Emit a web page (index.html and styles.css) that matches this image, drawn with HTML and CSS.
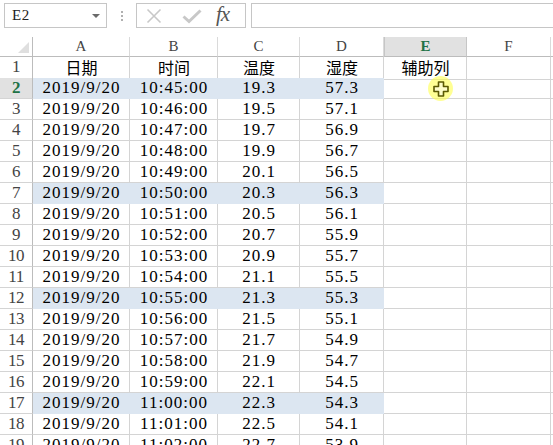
FILE: index.html
```html
<!DOCTYPE html>
<html>
<head>
<meta charset="utf-8">
<link rel="stylesheet" href="styles.css">
</head>
<body>
<div class="app">
  <div class="toolbar">
    <div class="namebox"><span class="name">E2</span><span class="caret"></span></div>
    <div class="grip"><i></i><i></i><i></i></div>
    <div class="fxbox">
      <svg class="ico x" width="16" height="16" viewBox="0 0 16 16"><path d="M1.5 1.5 L14.5 14.5 M14.5 1.5 L1.5 14.5" stroke="#c8c8c8" stroke-width="1.6" fill="none"/></svg>
      <svg class="ico v" width="20" height="16" viewBox="0 0 20 16"><path d="M1.5 8.5 L7 13.5 L18.5 2.5" stroke="#c8c8c8" stroke-width="3" fill="none"/></svg>
      <span class="fx">fx</span>
    </div>
    <div class="formula"></div>
  </div>
  <div class="sheet">
    <div class="row head">
      <div class="rh corner"><span class="tri"></span></div>
      <div class="ch">A</div><div class="ch">B</div><div class="ch">C</div><div class="ch">D</div><div class="ch sel">E</div><div class="ch">F</div><div class="ch"></div>
    </div>
    <div class="row"><div class="rh">1</div><div class="c"><span class="cjk" lang="zh-CN">日期</span></div><div class="c"><span class="cjk" lang="zh-CN">时间</span></div><div class="c"><span class="cjk" lang="zh-CN">温度</span></div><div class="c"><span class="cjk" lang="zh-CN">湿度</span></div><div class="c"><span class="cjk" lang="zh-CN">辅助列</span></div><div class="c"></div><div class="c"></div></div>
    <div class="row hl"><div class="rh sel">2</div><div class="c">2019/9/20</div><div class="c">10:45:00</div><div class="c">19.3</div><div class="c">57.3</div><div class="c"></div><div class="c"></div><div class="c"></div></div>
    <div class="row"><div class="rh">3</div><div class="c">2019/9/20</div><div class="c">10:46:00</div><div class="c">19.5</div><div class="c">57.1</div><div class="c"></div><div class="c"></div><div class="c"></div></div>
    <div class="row"><div class="rh">4</div><div class="c">2019/9/20</div><div class="c">10:47:00</div><div class="c">19.7</div><div class="c">56.9</div><div class="c"></div><div class="c"></div><div class="c"></div></div>
    <div class="row"><div class="rh">5</div><div class="c">2019/9/20</div><div class="c">10:48:00</div><div class="c">19.9</div><div class="c">56.7</div><div class="c"></div><div class="c"></div><div class="c"></div></div>
    <div class="row"><div class="rh">6</div><div class="c">2019/9/20</div><div class="c">10:49:00</div><div class="c">20.1</div><div class="c">56.5</div><div class="c"></div><div class="c"></div><div class="c"></div></div>
    <div class="row hl"><div class="rh">7</div><div class="c">2019/9/20</div><div class="c">10:50:00</div><div class="c">20.3</div><div class="c">56.3</div><div class="c"></div><div class="c"></div><div class="c"></div></div>
    <div class="row"><div class="rh">8</div><div class="c">2019/9/20</div><div class="c">10:51:00</div><div class="c">20.5</div><div class="c">56.1</div><div class="c"></div><div class="c"></div><div class="c"></div></div>
    <div class="row"><div class="rh">9</div><div class="c">2019/9/20</div><div class="c">10:52:00</div><div class="c">20.7</div><div class="c">55.9</div><div class="c"></div><div class="c"></div><div class="c"></div></div>
    <div class="row"><div class="rh">10</div><div class="c">2019/9/20</div><div class="c">10:53:00</div><div class="c">20.9</div><div class="c">55.7</div><div class="c"></div><div class="c"></div><div class="c"></div></div>
    <div class="row"><div class="rh">11</div><div class="c">2019/9/20</div><div class="c">10:54:00</div><div class="c">21.1</div><div class="c">55.5</div><div class="c"></div><div class="c"></div><div class="c"></div></div>
    <div class="row hl"><div class="rh">12</div><div class="c">2019/9/20</div><div class="c">10:55:00</div><div class="c">21.3</div><div class="c">55.3</div><div class="c"></div><div class="c"></div><div class="c"></div></div>
    <div class="row"><div class="rh">13</div><div class="c">2019/9/20</div><div class="c">10:56:00</div><div class="c">21.5</div><div class="c">55.1</div><div class="c"></div><div class="c"></div><div class="c"></div></div>
    <div class="row"><div class="rh">14</div><div class="c">2019/9/20</div><div class="c">10:57:00</div><div class="c">21.7</div><div class="c">54.9</div><div class="c"></div><div class="c"></div><div class="c"></div></div>
    <div class="row"><div class="rh">15</div><div class="c">2019/9/20</div><div class="c">10:58:00</div><div class="c">21.9</div><div class="c">54.7</div><div class="c"></div><div class="c"></div><div class="c"></div></div>
    <div class="row"><div class="rh">16</div><div class="c">2019/9/20</div><div class="c">10:59:00</div><div class="c">22.1</div><div class="c">54.5</div><div class="c"></div><div class="c"></div><div class="c"></div></div>
    <div class="row hl"><div class="rh">17</div><div class="c">2019/9/20</div><div class="c">11:00:00</div><div class="c">22.3</div><div class="c">54.3</div><div class="c"></div><div class="c"></div><div class="c"></div></div>
    <div class="row"><div class="rh">18</div><div class="c">2019/9/20</div><div class="c">11:01:00</div><div class="c">22.5</div><div class="c">54.1</div><div class="c"></div><div class="c"></div><div class="c"></div></div>
    <div class="row"><div class="rh">19</div><div class="c">2019/9/20</div><div class="c">11:02:00</div><div class="c">22.7</div><div class="c">53.9</div><div class="c"></div><div class="c"></div><div class="c"></div></div>
    <div class="cursor">
      <svg width="16" height="16" viewBox="0 0 16 16"><path d="M5.5 1 H10.5 V5.5 H15 V10.5 H10.5 V15 H5.5 V10.5 H1 V5.5 H5.5 Z" fill="#fdfdc8" stroke="#5b5a00" stroke-width="1.6" stroke-linejoin="round"/></svg>
    </div>
  </div>
</div>
</body>
</html>
```
FILE: styles.css
```css
html, body {
  margin: 0;
  padding: 0;
  background: #ffffff;
  overflow: hidden;
}
.app {
  width: 553px;
  height: 445px;
  overflow: hidden;
  font-family: "Liberation Serif", "DejaVu Serif", serif;
}
.toolbar {
  height: 30px;
  padding-top: 3px;
  box-sizing: border-box;
  display: flex;
  align-items: flex-start;
}
.namebox {
  margin-left: 4px;
  width: 103px;
  height: 25px;
  box-sizing: border-box;
  border: 1px solid #c6c6c6;
  display: flex;
  align-items: center;
  justify-content: space-between;
  padding: 0 6px 0 7px;
}
.name {
  font-size: 15px;
  letter-spacing: 0.5px;
  color: #222;
}
.caret {
  width: 0;
  height: 0;
  border-left: 4px solid transparent;
  border-right: 4px solid transparent;
  border-top: 4px solid #6a6a6a;
}
.grip {
  width: 29px;
  height: 25px;
  display: flex;
  flex-direction: column;
  align-items: center;
  justify-content: center;
  gap: 2px;
}
.grip i {
  display: block;
  width: 2px;
  height: 2px;
  background: #b0b0b0;
}
.fxbox {
  width: 110px;
  height: 25px;
  box-sizing: border-box;
  border: 1px solid #c6c6c6;
  display: flex;
  align-items: center;
  padding-left: 9px;
}
.ico.x { margin-right: 20px; }
.ico.v { margin-right: 14px; }
.fx {
  font-family: "Liberation Serif", serif;
  font-style: italic;
  font-size: 21px;
  color: #555;
  letter-spacing: -1px;
  line-height: 1;
  margin-top: -2px;
}
.formula {
  margin-left: 5px;
  flex: 1;
  height: 25px;
  box-sizing: border-box;
  border: 1px solid #c6c6c6;
  border-right: none;
}
.sheet {
  position: relative;
  margin-top: 7px;
}
.row {
  display: grid;
  grid-template-columns: 33px 97px 88px 82px 84px 83px 84px 20px;
  height: 21px;
}
.row.head { height: 20px; }
.row > div {
  box-sizing: border-box;
  border-right: 1px solid #d4d4d4;
  border-bottom: 1px solid #d4d4d4;
  text-align: center;
  white-space: nowrap;
}
.c {
  font-size: 17px;
  letter-spacing: 1px;
  line-height: 20px;
  color: #000;
  text-indent: 1px;
}
.cjk {
  font-family: "Noto Sans CJK SC", sans-serif;
  font-size: 16px;
  line-height: 20px;
  font-weight: 400;
  letter-spacing: 0;
}
.rh {
  font-size: 17px;
  letter-spacing: -0.5px;
  line-height: 20px;
  color: #444;
  border-right-color: #bcbcbc !important;
}
.rh.sel {
  background: #e1e1e1;
  color: #217346;
  font-weight: bold;
}
.ch {
  font-size: 15px;
  line-height: 19px;
  color: #444;
  border-right-color: #dadada !important;
  border-bottom-color: #bcbcbc !important;
}
.ch.sel {
  background: #e1e1e1;
  color: #217346;
  font-weight: bold;
  border-right-color: #c6c6c6 !important;
  border-left: 1px solid #c6c6c6;
}
.corner {
  position: relative;
  border-bottom-color: #bcbcbc !important;
}
.tri {
  position: absolute;
  right: 3px;
  bottom: 3px;
  width: 0;
  height: 0;
  border-left: 11px solid transparent;
  border-bottom: 11px solid #dfdfdf;
}
.row.hl .c:nth-child(-n+5) {
  background: #dce6f1;
  border-right-color: #dce6f1;
  border-bottom-color: #dce6f1;
}
.cursor {
  position: absolute;
  left: 428px;
  top: 39px;
  width: 25px;
  height: 25px;
  border-radius: 50%;
  background: rgba(255, 255, 60, 0.55);
  display: flex;
  align-items: center;
  justify-content: center;
}
```
